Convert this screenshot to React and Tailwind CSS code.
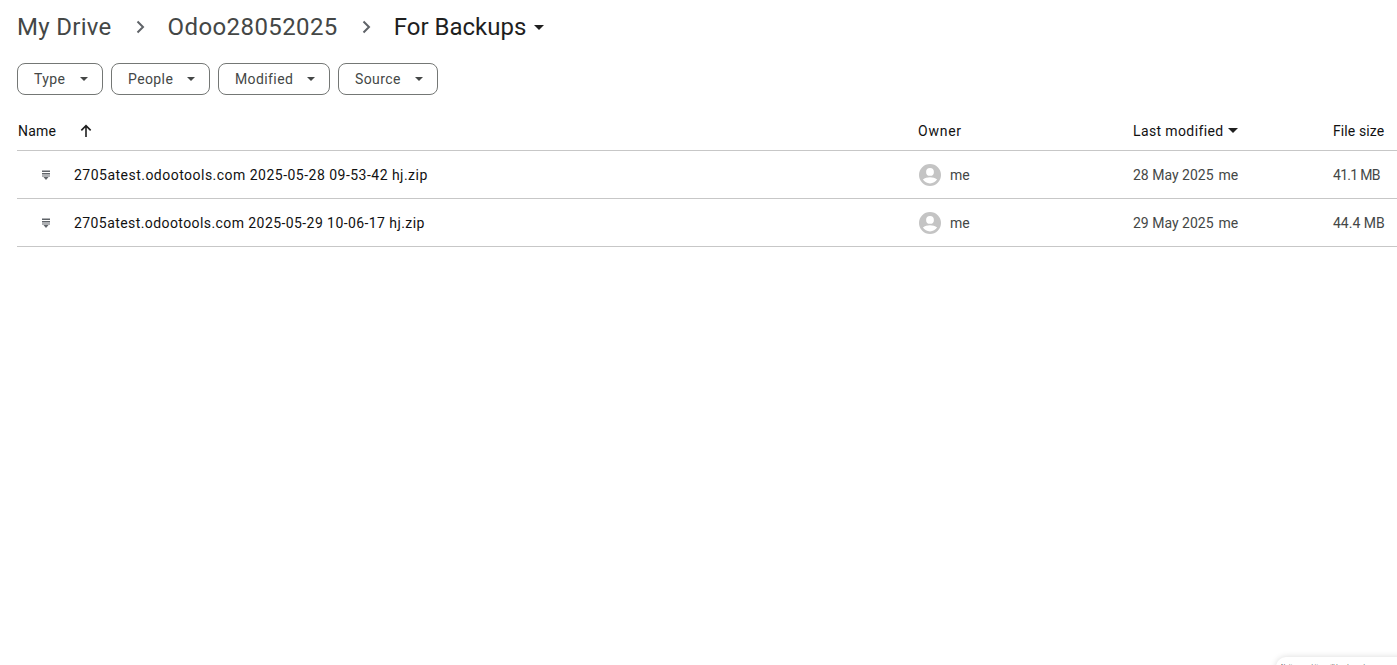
const font = { fontFamily: '"Roboto", "Open Sans", sans-serif' };

function Caret({ className }) {
  return (
    <svg viewBox="0 0 10 5" className={className} fill="currentColor">
      <path d="M0 0h10L5 5z" />
    </svg>
  );
}

function Chevron() {
  return (
    <svg viewBox="0 0 24 24" className="w-6 h-6 text-[#5f6368]" fill="none" stroke="currentColor" strokeWidth="2">
      <path d="M9.500 6.500 15 12l-5.500 5.500" />
    </svg>
  );
}

function Filter({ label, width }) {
  return (
    <button className={`${width} h-8 flex items-center justify-between pl-4 pr-[14px] border border-[#747775] rounded-lg text-sm text-[#444746] tracking-[0.4px]`}>
      <span>{label}</span>
      <Caret className="w-2 h-1 text-[#444746]" />
    </button>
  );
}

function ZipIcon() {
  return (
    <svg viewBox="0 0 10 10" className="w-[10px] h-[10px] text-[#5f6368]" fill="currentColor">
      <rect x="1" y="0.500" width="8" height="1.500" />
      <rect x="1" y="3" width="8" height="1.500" />
      <rect x="1" y="5.500" width="8" height="1" />
      <path d="M2.500 7h5L5 10z" />
    </svg>
  );
}

function Avatar() {
  return (
    <svg viewBox="0 0 24 24" className="w-6 h-6 text-[#c4c4c4]" fill="currentColor">
      <path d="M12 1a11 11 0 1 0 0 22 11 11 0 0 0 0-22zm0 4a3.900 3.900 0 1 1 0 7.800A3.900 3.900 0 0 1 12 5zm0 15.400c-3 0-5.600-1.500-7.100-3.800 1.800-1.500 4.500-2.300 7.100-2.300s5.300.8 7.100 2.300c-1.500 2.300-4.100 3.800-7.100 3.800z" />
    </svg>
  );
}

const rows = [
  { name: '2705atest.odootools.com 2025-05-28 09-53-42 hj.zip', nameTrack: 'tracking-[0.48px]', date: '28 May 2025', size: '41.1 MB', sizeTrack: 'tracking-[-0.7px]' },
  { name: '2705atest.odootools.com 2025-05-29 10-06-17 hj.zip', nameTrack: 'tracking-[0.42px]', date: '29 May 2025', size: '44.4 MB', sizeTrack: 'tracking-normal' },
];

export default function App() {
  return (
    <div style={font} className="relative w-[1397px] h-[665px] overflow-hidden bg-white">
      <div className="pl-[17px] pt-[8px]">
        <div className="h-[38px] flex items-center text-[24px] text-[#444746]">
          <span className="tracking-[0.3px]">My Drive</span>
          <span className="ml-4 mr-[16px] flex"><Chevron /></span>
          <span className="tracking-[0.4px]">Odoo28052025</span>
          <span className="ml-4 mr-[16px] flex"><Chevron /></span>
          <span className="text-[#1f1f1f]">For Backups</span>
          <Caret className="w-[10px] h-[5px] ml-2 text-[#1f1f1f]" />
        </div>

        <div className="flex gap-2 mt-[17px]">
          <Filter label="Type" width="w-[86px]" />
          <Filter label="People" width="w-[99px]" />
          <Filter label="Modified" width="w-[112px]" />
          <Filter label="Source" width="w-[100px]" />
        </div>

        <div className="mt-4 flex items-center h-[40px] border-b border-[#c7c7c7] text-sm text-[#111111]">
          <div className="w-[901px] flex items-center pl-px">
            <span className="tracking-[0.2px]">Name</span>
            <svg viewBox="0 0 24 24" className="w-4 h-4 ml-[22px] text-[#1f1f1f]" fill="none" stroke="currentColor" strokeWidth="2.400">
              <path d="M12 21V4M5 11l7-7 7 7" />
            </svg>
          </div>
          <div className="w-[215px] tracking-[0.75px]">Owner</div>
          <div className="w-[200px] flex items-center">
            <span className="tracking-[0.38px]">Last modified</span>
            <Caret className="w-[10px] h-[5px] ml-1 text-[#1f1f1f]" />
          </div>
          <div className="tracking-[0.1px]">File size</div>
        </div>

        {rows.map((r) => (
          <div key={r.name} className="flex items-center h-[48px] border-b border-[#c7c7c7] text-sm text-[#444746]">
            <div className="w-[901px] flex items-center">
              <span className="ml-[24px] w-[33px] flex"><ZipIcon /></span>
              <span className={`text-[#111111] ${r.nameTrack}`}>{r.name}</span>
            </div>
            <div className="w-[215px] flex items-center">
              <span className="w-[32px] flex"><Avatar /></span>
              <span>me</span>
            </div>
            <div className="w-[200px]">{r.date}<span className="ml-[5px]">me</span></div>
            <div className={r.sizeTrack}>{r.size}</div>
          </div>
        ))}
      </div>

      <div className="absolute left-[1276px] top-[657px] w-[140px] h-[30px] bg-white rounded-t-[10px] shadow-[0_0_6px_rgba(0,0,0,0.15)] pl-[5px] pt-[5px] text-[6px] leading-[8px] text-[#555] whitespace-nowrap">
        Notices and tips will be shown here
      </div>
    </div>
  );
}
